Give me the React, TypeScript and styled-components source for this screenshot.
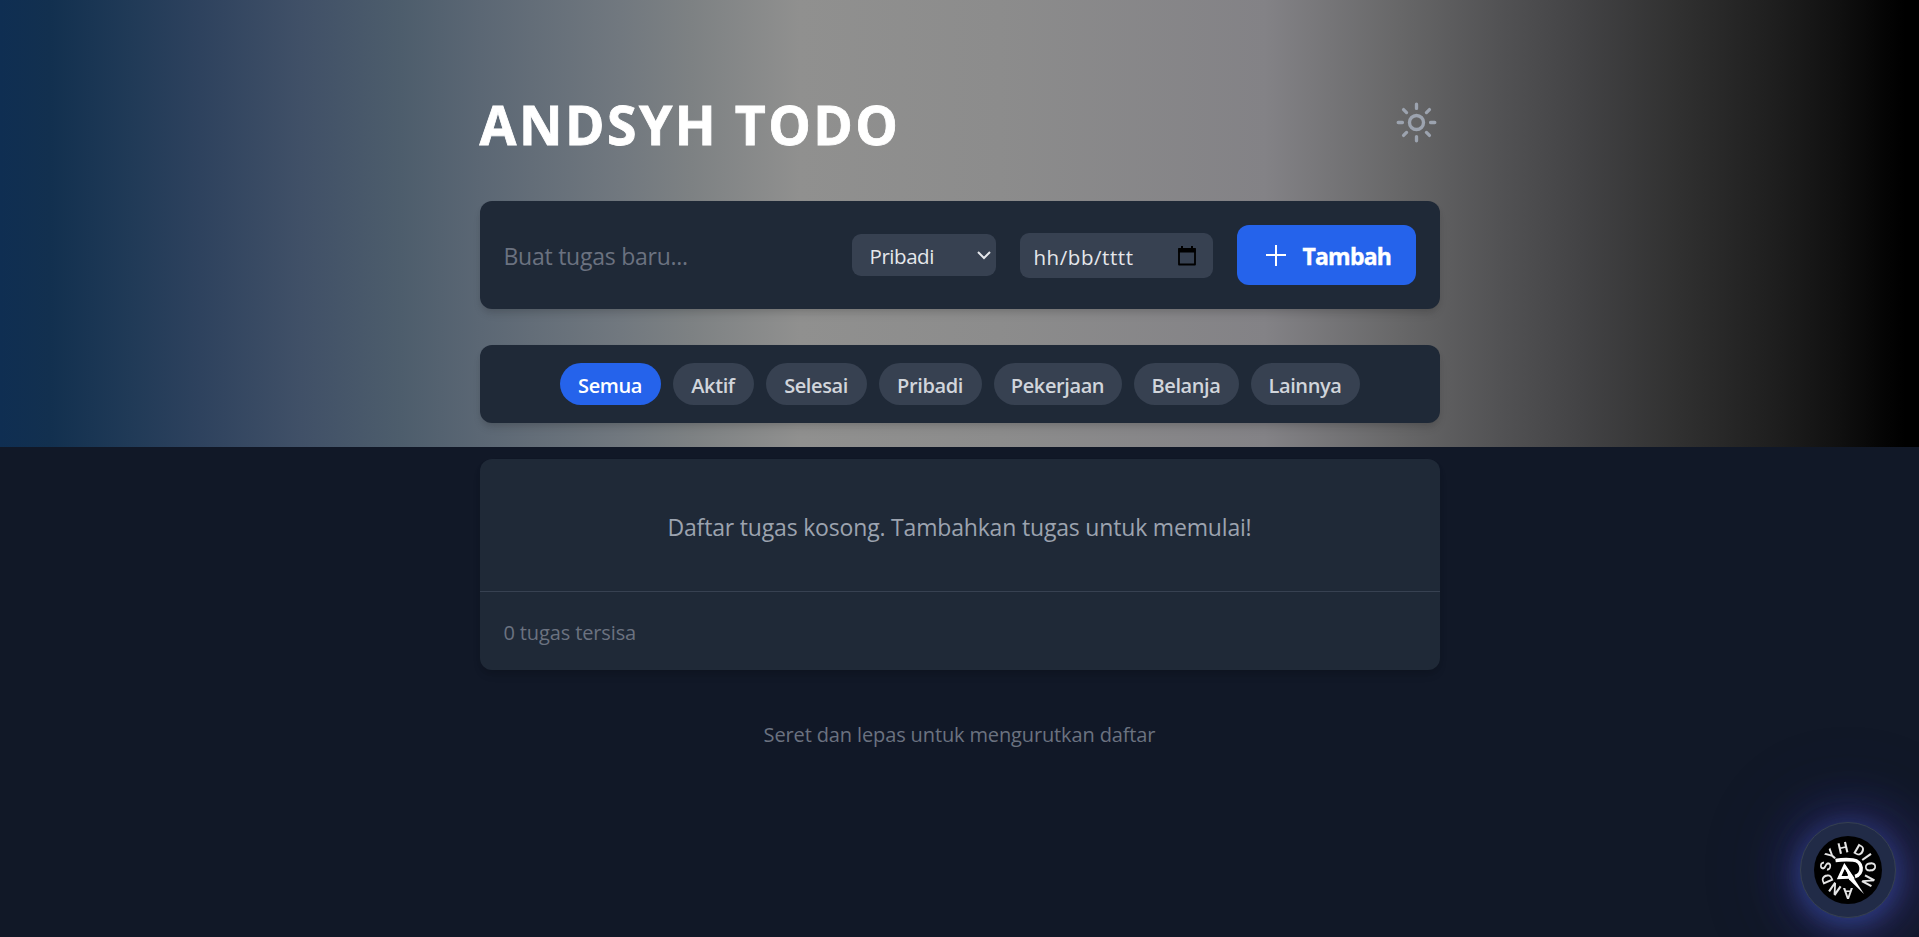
import React from "react";
import styled, { createGlobalStyle } from "styled-components";
import { IoSunnyOutline } from "react-icons/io5";

const Global = createGlobalStyle`
  *, *::before, *::after { box-sizing: border-box; }
  html { background: #111827; }
  body { margin: 0; background: #111827; font-family: "Open Sans", "Noto Sans", sans-serif; font-size: 23px; line-height: 36px; }
  button, input, select { font: inherit; border: 0; margin: 0; }
`;

const Page = styled.div`
  min-height: 937px;
  overflow: hidden;
  background:
    linear-gradient(90deg, #0f2e52 0, #12304f 50px, #203a57 130px, #2e425e 200px, #405067 300px, #4d5d6c 400px, #5b6774 480px, #71787f 620px, #7d8183 690px, #90908f 800px, #8c8c8c 1000px, #838286 1265px, #676768 1400px, #525254 1500px, #434345 1580px, #303030 1680px, #1d1d1d 1780px, #101010 1840px, #040404 1885px, #000 1905px) 0 0 / 100% 447px no-repeat,
    #111827;
`;
const Column = styled.main`
  width: 960px;
  margin: 0 auto;
  padding-top: 95px;
  display: flex;
  flex-direction: column;
`;
const Header = styled.header`
  display: flex;
  justify-content: space-between;
  align-items: flex-start;
  height: 106px;
`;
const Title = styled.h1`
  margin: 0;
  font-size: 53.5px;
  line-height: 60px;
  font-weight: 700;
  letter-spacing: 2.5px;
  color: #fff;
  -webkit-text-stroke: 0.8px #fff;
`;
const ThemeButton = styled.button`
  display: flex;
  padding: 5px 1px 0 0;
  background: none;
  color: #9ca3af;
  svg * { stroke-width: 38px; }
`;
const Card = styled.section`
  background: #1f2937;
  border-radius: 12px;
  box-shadow: 0 6px 9px -1px rgba(0, 0, 0, 0.1), 0 3px 6px -2px rgba(0, 0, 0, 0.1);
`;
const Composer = styled(Card)`
  display: flex;
  align-items: center;
  gap: 24px;
  height: 108px;
  padding: 24px;
`;
const TaskInput = styled.input`
  flex: 1;
  min-width: 0;
  padding: 2px 0 0;
  background: none;
  color: #fff;
  letter-spacing: -0.25px;
  &::placeholder { color: #6b7280; opacity: 1; }
`;
const Field = styled.div<{ $w: number; $h: number }>`
  flex: none;
  display: flex;
  align-items: center;
  justify-content: space-between;
  width: ${(p) => p.$w}px;
  height: ${(p) => p.$h}px;
  border-radius: 9px;
  background: #374151;
  color: #e5e7eb;
  font-size: 20.5px;
`;
const FieldText = styled.span`
  padding-top: 2px;
`;
const SelectField = styled(Field)`
  padding: 0 4px 0 18px;
  letter-spacing: -0.45px;
`;
const DateField = styled(Field)`
  padding: 1px 17px 0 14px;
  letter-spacing: 0.55px;
`;
const AddButton = styled.button`
  flex: none;
  display: flex;
  align-items: center;
  gap: 12px;
  width: 179px;
  height: 60px;
  padding: 0 0 0 24px;
  border-radius: 12px;
  background: #2563eb;
  color: #fff;
  font-weight: 700;
  letter-spacing: -0.8px;
  -webkit-text-stroke: 0.4px #fff;
`;
const Filters = styled(Card)`
  display: flex;
  justify-content: center;
  gap: 12px;
  margin-top: 36px;
  padding: 18px;
`;
const Pill = styled.button<{ $w: number; $active?: boolean }>`
  width: ${(p) => p.$w}px;
  height: 42px;
  padding: 3px 0 0;
  border-radius: 21px;
  background: ${(p) => (p.$active ? "#2563eb" : "#374151")};
  color: ${(p) => (p.$active ? "#fff" : "#d1d5db")};
  font-size: 20px;
  line-height: 30px;
  font-weight: 600;
  letter-spacing: -0.4px;
`;
const List = styled(Card)`
  margin-top: 36px;
`;
const Empty = styled.p`
  margin: 0;
  padding: 50px 48px 46px;
  text-align: center;
  letter-spacing: -0.18px;
  color: #9ca3af;
`;
const Note = styled.p`
  margin: 0;
  font-size: 20px;
  line-height: 30px;
  letter-spacing: -0.13px;
  color: #6b7280;
`;
const ListFooter = styled.footer`
  padding: 26px 24px 22px;
  border-top: 1px solid #374151;
`;
const Hint = styled(Note)`
  padding-top: 50px;
  text-align: center;
`;
const Fab = styled.button`
  position: fixed;
  right: 23px;
  bottom: 19px;
  display: grid;
  place-items: center;
  width: 96px;
  height: 96px;
  padding: 0;
  border-radius: 50%;
  border: 1px solid #374151;
  background: #212b47;
  box-shadow:
    0 6px 24px rgba(59, 100, 210, 0.4),
    0 0 60px 6px rgba(79, 70, 210, 0.34),
    14px 8px 70px 8px rgba(120, 60, 150, 0.16),
    0 0 100px 16px rgba(40, 80, 150, 0.14);
`;

const filters = [
  { label: "Semua", width: 101 },
  { label: "Aktif", width: 81 },
  { label: "Selesai", width: 101 },
  { label: "Pribadi", width: 103 },
  { label: "Pekerjaan", width: 128 },
  { label: "Belanja", width: 105 },
  { label: "Lainnya", width: 109 },
];

const ring: [string, number][] = [
  ["A", 180], ["N", 215], ["D", 247], ["S", 280], ["Y", 312], ["H", 347],
  ["D", 30], ["I", 55], ["O", 82], ["N", 118],
];

const Logo = () => (
  <svg width="68" height="68" viewBox="-34 -34 68 68">
    <circle r="34" fill="#000" />
    {ring.map(([letter, angle]) => (
      <text key={angle} transform={`rotate(${angle})`} y="-17.5" textAnchor="middle" fontFamily="Roboto, sans-serif" fontWeight="600" fontSize="15" fill="#e6e6e6">{letter}</text>
    ))}
    <path d="M-12.5 -9.5C-6 -10.5 0 -10.5 5 -10C15 -9 16 4 7 6.5" fill="none" stroke="#fff" strokeWidth="3.6" />
    <path d="M-3.5 -4L-8.8 7.6L4 7.2Z" fill="none" stroke="#fff" strokeWidth="3" />
    <path d="M-4 -7L16 24L1 9.5Z" fill="#fff" />
    <path d="M-3.2 0L-5.2 5L0 4.8Z" fill="#000" />
  </svg>
);

export default function App() {
  return (
    <Page>
      <Global />
      <Column>
        <Header>
          <Title>ANDSYH TODO</Title>
          <ThemeButton aria-label="Tema"><IoSunnyOutline size={45} /></ThemeButton>
        </Header>
        <Composer>
          <TaskInput placeholder="Buat tugas baru..." />
          <SelectField $w={144} $h={42}>
            <FieldText>Pribadi</FieldText>
            <svg width="16" height="16" viewBox="0 0 16 16"><path d="M2 5L8 11L14 5" fill="none" stroke="#e5e7eb" strokeWidth="2" /></svg>
          </SelectField>
          <DateField $w={193} $h={45}>
            <FieldText>hh/bb/tttt</FieldText>
            <svg width="18" height="20" viewBox="0 0 18 20"><path d="M1 3H17V18.5H1Z" fill="none" stroke="#000" strokeWidth="1.8" strokeLinejoin="round" /><path d="M0.5 2H17.5V6.5H0.5ZM3 0H5V3H3ZM13 0H15V3H13Z" /></svg>
          </DateField>
          <AddButton>
            <svg width="30" height="30" viewBox="0 0 30 30"><path d="M15 5V26M5 15H25" stroke="#fff" strokeWidth="2" /></svg>
            <FieldText>Tambah</FieldText>
          </AddButton>
        </Composer>
        <Filters>
          {filters.map((f, i) => <Pill key={f.label} $w={f.width} $active={i === 0}>{f.label}</Pill>)}
        </Filters>
        <List>
          <Empty>Daftar tugas kosong. Tambahkan tugas untuk memulai!</Empty>
          <ListFooter><Note>0 tugas tersisa</Note></ListFooter>
        </List>
        <Hint>Seret dan lepas untuk mengurutkan daftar</Hint>
      </Column>
      <Fab aria-label="Andsyh Dion"><Logo /></Fab>
    </Page>
  );
}
